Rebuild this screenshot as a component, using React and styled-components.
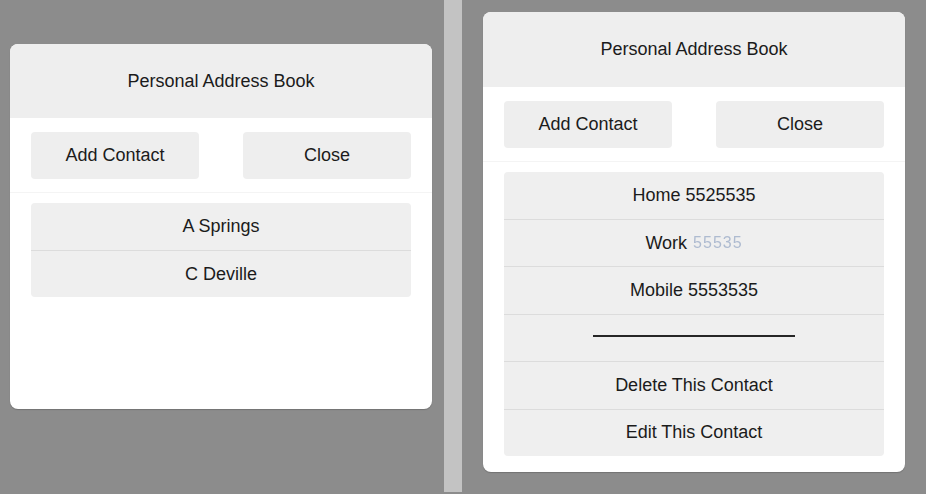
import React from "react";
import styled, { createGlobalStyle } from "styled-components";

const Global = createGlobalStyle`
  html, body { margin: 0; padding: 0; }
  body {
    background: #8c8c8c;
    font-family: "Liberation Sans", Arial, sans-serif;
    color: #1b1b1b;
  }
`;

const Screen = styled.div`
  display: flex;
  width: 926px;
  height: 494px;
  overflow: hidden;
`;

const Pane = styled.div`
  display: flex;
  align-items: flex-start;
  width: ${(p) => p.$width}px;
  padding: ${(p) => p.$top}px 0 0 ${(p) => p.$left}px;
  box-sizing: border-box;
`;

const Divider = styled.div`
  width: 18px;
  height: 492px;
  background: #c3c3c3;
  flex: none;
`;

const Card = styled.div`
  width: 422px;
  min-height: ${(p) => p.$minHeight || 0}px;
  background: #ffffff;
  border-radius: 8px;
  overflow: hidden;
  box-shadow: 0 1px 1px rgba(0, 0, 0, 0.18);
  display: flex;
  flex-direction: column;
  box-sizing: border-box;
`;

const Header = styled.div`
  height: ${(p) => p.$h}px;
  background: #eeeeee;
  display: flex;
  align-items: center;
  justify-content: center;
  font-size: 18px;
`;

const Actions = styled.div`
  display: flex;
  justify-content: space-between;
  padding: 14px 21px 13px;
  border-bottom: 1px solid #f4f4f4;
`;

const Button = styled.div`
  width: 168px;
  height: 47px;
  background: #eeeeee;
  border-radius: 4px;
  display: flex;
  align-items: center;
  justify-content: center;
  font-size: 18px;
`;

const List = styled.div`
  margin: 10px 21px 16px;
  background: #efefef;
  border-radius: 4px;
  display: flex;
  flex-direction: column;
`;

const Row = styled.div`
  height: 47px;
  box-sizing: border-box;
  display: flex;
  align-items: center;
  justify-content: center;
  font-size: 18px;
  & + & {
    border-top: 1px solid #dcdcdc;
    height: 47.4px;
  }
`;

const Masked = styled.span`
  margin-left: 6px;
  font-size: 16px;
  color: #aebbd0;
  letter-spacing: 1px;
  filter: blur(0.5px);
`;

const Rule = styled.span`
  display: block;
  width: 202px;
  height: 2px;
  background: #262626;
  margin-top: -3px;
`;

export default function App() {
  return (
    <>
      <Global />
      <Screen>
        <Pane $width={444} $top={44} $left={10}>
          <Card $minHeight={365}>
            <Header $h={74}>Personal Address Book</Header>
            <Actions>
              <Button>Add Contact</Button>
              <Button>Close</Button>
            </Actions>
            <List>
              <Row>A Springs</Row>
              <Row>C Deville</Row>
            </List>
          </Card>
        </Pane>
        <Divider />
        <Pane $width={464} $top={12} $left={21}>
          <Card>
            <Header $h={75}>Personal Address Book</Header>
            <Actions>
              <Button>Add Contact</Button>
              <Button>Close</Button>
            </Actions>
            <List>
              <Row>Home 5525535</Row>
              <Row>
                Work<Masked>55535</Masked>
              </Row>
              <Row>Mobile 5553535</Row>
              <Row>
                <Rule aria-label="________________________" />
              </Row>
              <Row>Delete This Contact</Row>
              <Row>Edit This Contact</Row>
            </List>
          </Card>
        </Pane>
      </Screen>
    </>
  );
}
